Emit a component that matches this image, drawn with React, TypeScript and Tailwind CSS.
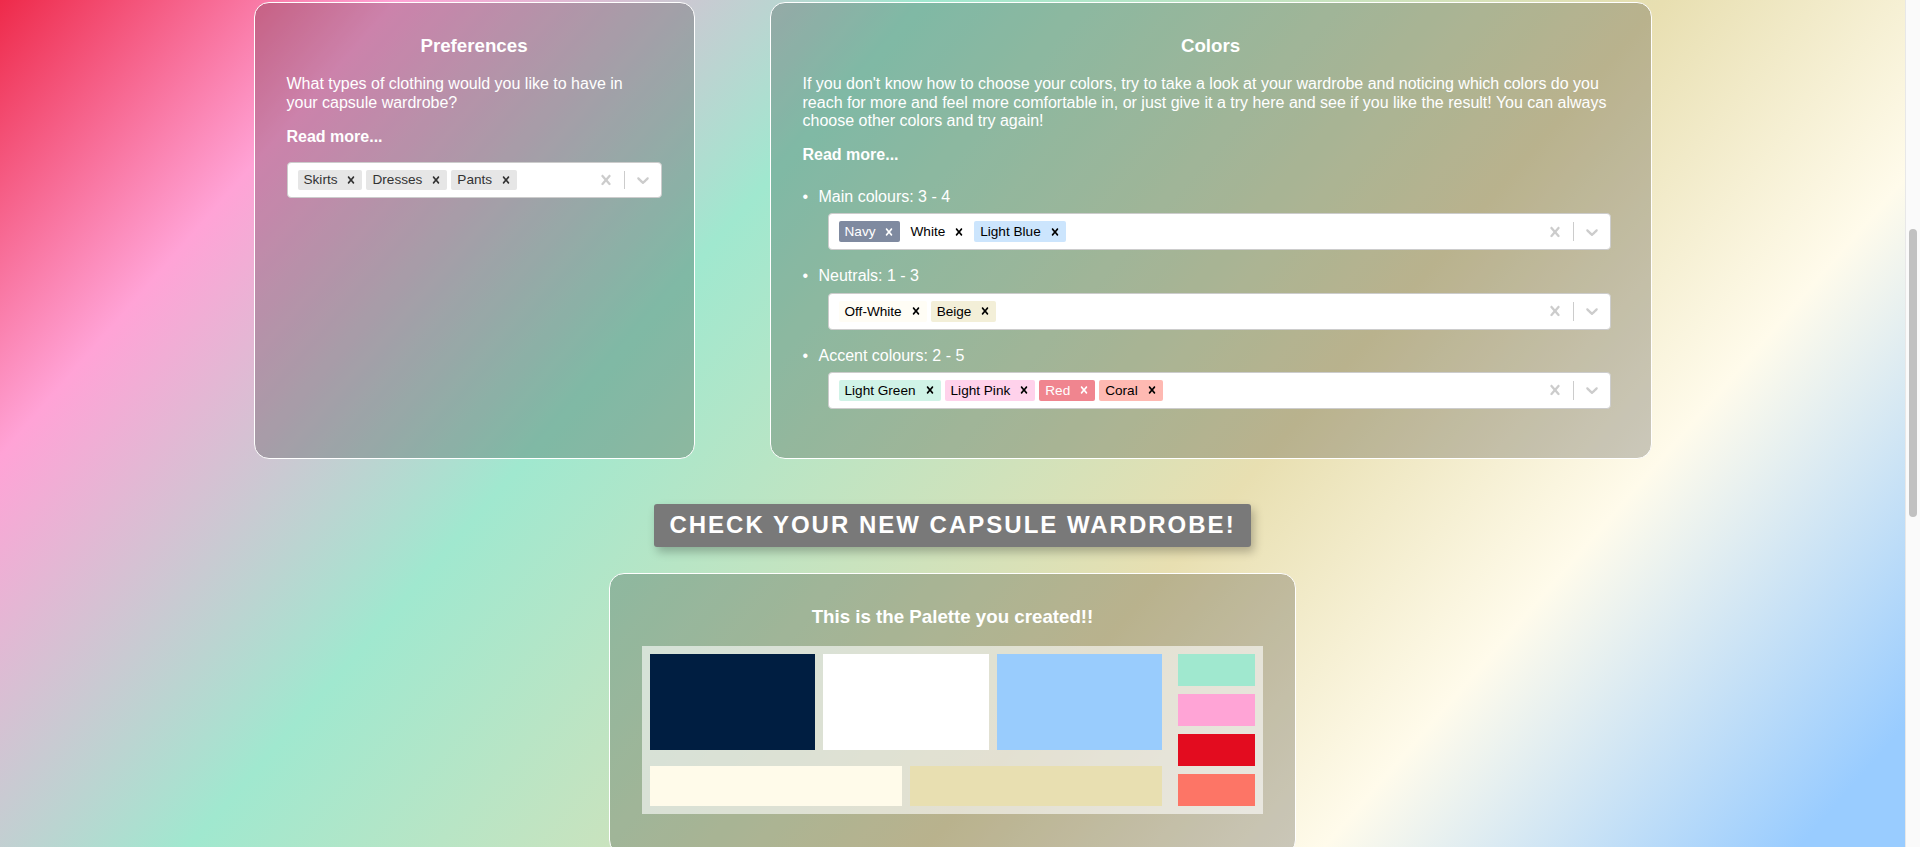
import React from "react";

type ChipData = { label: string; bg: string; fg: string };

function CrossIcon({ size }: { size: number }) {
  return (
    <svg width={size} height={size} viewBox="0 0 20 20" fill="currentColor" aria-hidden="true">
      <path d="M14.348 14.849c-0.469 0.469-1.229 0.469-1.697 0l-2.651-3.030-2.651 3.029c-0.469 0.469-1.229 0.469-1.697 0-0.469-0.469-0.469-1.229 0-1.697l2.758-3.15-2.759-3.152c-0.469-0.469-0.469-1.228 0-1.697s1.228-0.469 1.697 0l2.652 3.031 2.651-3.031c0.469-0.469 1.228-0.469 1.697 0s0.469 1.229 0 1.697l-2.758 3.152 2.758 3.15c0.469 0.469 0.469 1.229 0 1.698z" />
    </svg>
  );
}

function ChevronIcon() {
  return (
    <svg width={20} height={20} viewBox="0 0 20 20" fill="currentColor" aria-hidden="true">
      <path d="M4.516 7.548c0.436-0.446 1.043-0.481 1.576 0l3.908 3.747 3.908-3.747c0.533-0.481 1.141-0.446 1.574 0 0.436 0.445 0.408 1.197 0 1.615-0.406 0.418-4.695 4.502-4.695 4.502-0.217 0.223-0.502 0.335-0.787 0.335s-0.57-0.112-0.789-0.335c0 0-4.287-4.084-4.695-4.502s-0.436-1.17 0-1.615z" />
    </svg>
  );
}

function MultiSelect({
  chips,
  className,
  labelClass,
}: {
  chips: ChipData[];
  className: string;
  labelClass: string;
}) {
  return (
    <div className={`flex items-center rounded-[4px] border border-[#cccccc] bg-white ${className}`}>
      <div className="flex flex-1 flex-wrap items-center px-[8px] py-[2px]">
        {chips.map((c) => (
          <div key={c.label} className={`m-[2px] flex items-center rounded-[2px] ${c.bg} ${c.fg}`}>
            <span className={`py-[3px] pl-[6px] pr-[3px] text-[13.6px] ${labelClass}`}>{c.label}</span>
            <span className="flex items-center px-[4px]">
              <CrossIcon size={14} />
            </span>
          </div>
        ))}
      </div>
      <div className="flex items-center self-stretch text-[#cccccc]">
        <div className="p-[8px]">
          <CrossIcon size={20} />
        </div>
        <span className="my-[8px] w-px self-stretch bg-[#cccccc]" />
        <div className="p-[8px]">
          <ChevronIcon />
        </div>
      </div>
    </div>
  );
}

const card = "rounded-[15px] border border-white bg-black/20 px-[32px] pt-[32px] text-white";
const heading = "text-center text-[18.72px] font-bold leading-[1.15]";

const clothing: ChipData[] = [
  { label: "Skirts", bg: "bg-[#e6e6e6]", fg: "text-[#333333]" },
  { label: "Dresses", bg: "bg-[#e6e6e6]", fg: "text-[#333333]" },
  { label: "Pants", bg: "bg-[#e6e6e6]", fg: "text-[#333333]" },
];

const groups: { title: string; chips: ChipData[] }[] = [
  {
    title: "Main colours: 3 - 4",
    chips: [
      { label: "Navy", bg: "bg-[#7f8aa0]", fg: "text-white" },
      { label: "White", bg: "bg-white", fg: "text-black" },
      { label: "Light Blue", bg: "bg-[#cce5fd]", fg: "text-black" },
    ],
  },
  {
    title: "Neutrals: 1 - 3",
    chips: [
      { label: "Off-White", bg: "bg-[#fffdf5]", fg: "text-black" },
      { label: "Beige", bg: "bg-[#f3efd8]", fg: "text-black" },
    ],
  },
  {
    title: "Accent colours: 2 - 5",
    chips: [
      { label: "Light Green", bg: "bg-[#d0f3e7]", fg: "text-black" },
      { label: "Light Pink", bg: "bg-[#ffd2eb]", fg: "text-black" },
      { label: "Red", bg: "bg-[#f0858f]", fg: "text-white" },
      { label: "Coral", bg: "bg-[#feb9b2]", fg: "text-black" },
    ],
  },
];

export default function App() {
  return (
    <div className="flex h-[847px] w-full overflow-hidden font-['Liberation_Sans',Arial,sans-serif] text-[16px] leading-[1.15]">
      <main className="flex-1 overflow-hidden bg-[linear-gradient(131deg,#ee2a4a_0%,#ffa3d6_15%,#a0e8cf_35%,#e8dfb1_63%,#fffbeb_78%,#99ccff_96%)] pt-[2px]">
        <div className="flex flex-col items-center">
          <div className="grid grid-cols-[441px_882px] gap-x-[75px]">
            <section className={card}>
              <h3 className={heading}>Preferences</h3>
              <p className="mt-[18.7px] w-[350px]">
                What types of clothing would you like to have in your capsule wardrobe?
              </p>
              <p className="mt-[16px] font-bold">Read more...</p>
              <MultiSelect chips={clothing} className="mt-[16px] h-[36px]" labelClass="leading-[14px]" />
            </section>

            <section className={`${card} pb-[49px]`}>
              <h3 className={heading}>Colors</h3>
              <p className="mt-[18.7px]">
                If you don't know how to choose your colors, try to take a look at your wardrobe and noticing which
                colors do you reach for more and feel more comfortable in, or just give it a try here and see if you
                like the result! You can always choose other colors and try again!
              </p>
              <p className="mt-[16px] font-bold">Read more...</p>
              <ul className="mt-[23px] flex flex-col gap-[17px]">
                {groups.map((g) => (
                  <li key={g.title}>
                    <div className="flex">
                      <span className="w-[16px]">•</span>
                      <span>{g.title}</span>
                    </div>
                    <MultiSelect chips={g.chips} className="ml-[25px] mr-[8px] mt-[7px] h-[37px]" labelClass="leading-[15px]" />
                  </li>
                ))}
              </ul>
            </section>
          </div>

          <button
            type="button"
            className="mt-[45px] flex h-[43px] items-center rounded-[3px] bg-[#797979] px-[15px] text-[24px] font-bold uppercase leading-none tracking-[2px] text-white shadow-[3px_5px_10px_rgba(0,0,0,0.25)]"
          >
            Check your new capsule wardrobe!
          </button>

          <section className="mt-[26px] w-[687px] rounded-[15px] border border-white bg-black/20 px-[32px] pb-[40px] pt-[32px] text-white">
            <h3 className={heading}>This is the Palette you created!!</h3>
            <div className="mt-[18.5px] flex gap-[16px] bg-white/60 p-[8px]">
              <div className="flex w-[512px] flex-col gap-[16px]">
                <div className="grid h-[96px] grid-cols-3 gap-[8px]">
                  <div className="bg-[#001e41]" />
                  <div className="bg-white" />
                  <div className="bg-[#99ccfd]" />
                </div>
                <div className="grid h-[40px] grid-cols-2 gap-[8px]">
                  <div className="bg-[#fffbea]" />
                  <div className="bg-[#e8dfb1]" />
                </div>
              </div>
              <div className="flex w-[77px] flex-col gap-[8px]">
                <div className="h-[32px] bg-[#a0e8cf]" />
                <div className="h-[32px] bg-[#ffa4d6]" />
                <div className="h-[32px] bg-[#e30c1f]" />
                <div className="h-[32px] bg-[#fd7566]" />
              </div>
            </div>
          </section>
        </div>
      </main>
      <aside className="flex w-[15px] justify-center border-l border-[#e8e8e8] bg-[#fafafa]">
        <div className="mt-[229px] h-[288px] w-[8px] rounded-full bg-[#c1c1c1]" />
      </aside>
    </div>
  );
}
